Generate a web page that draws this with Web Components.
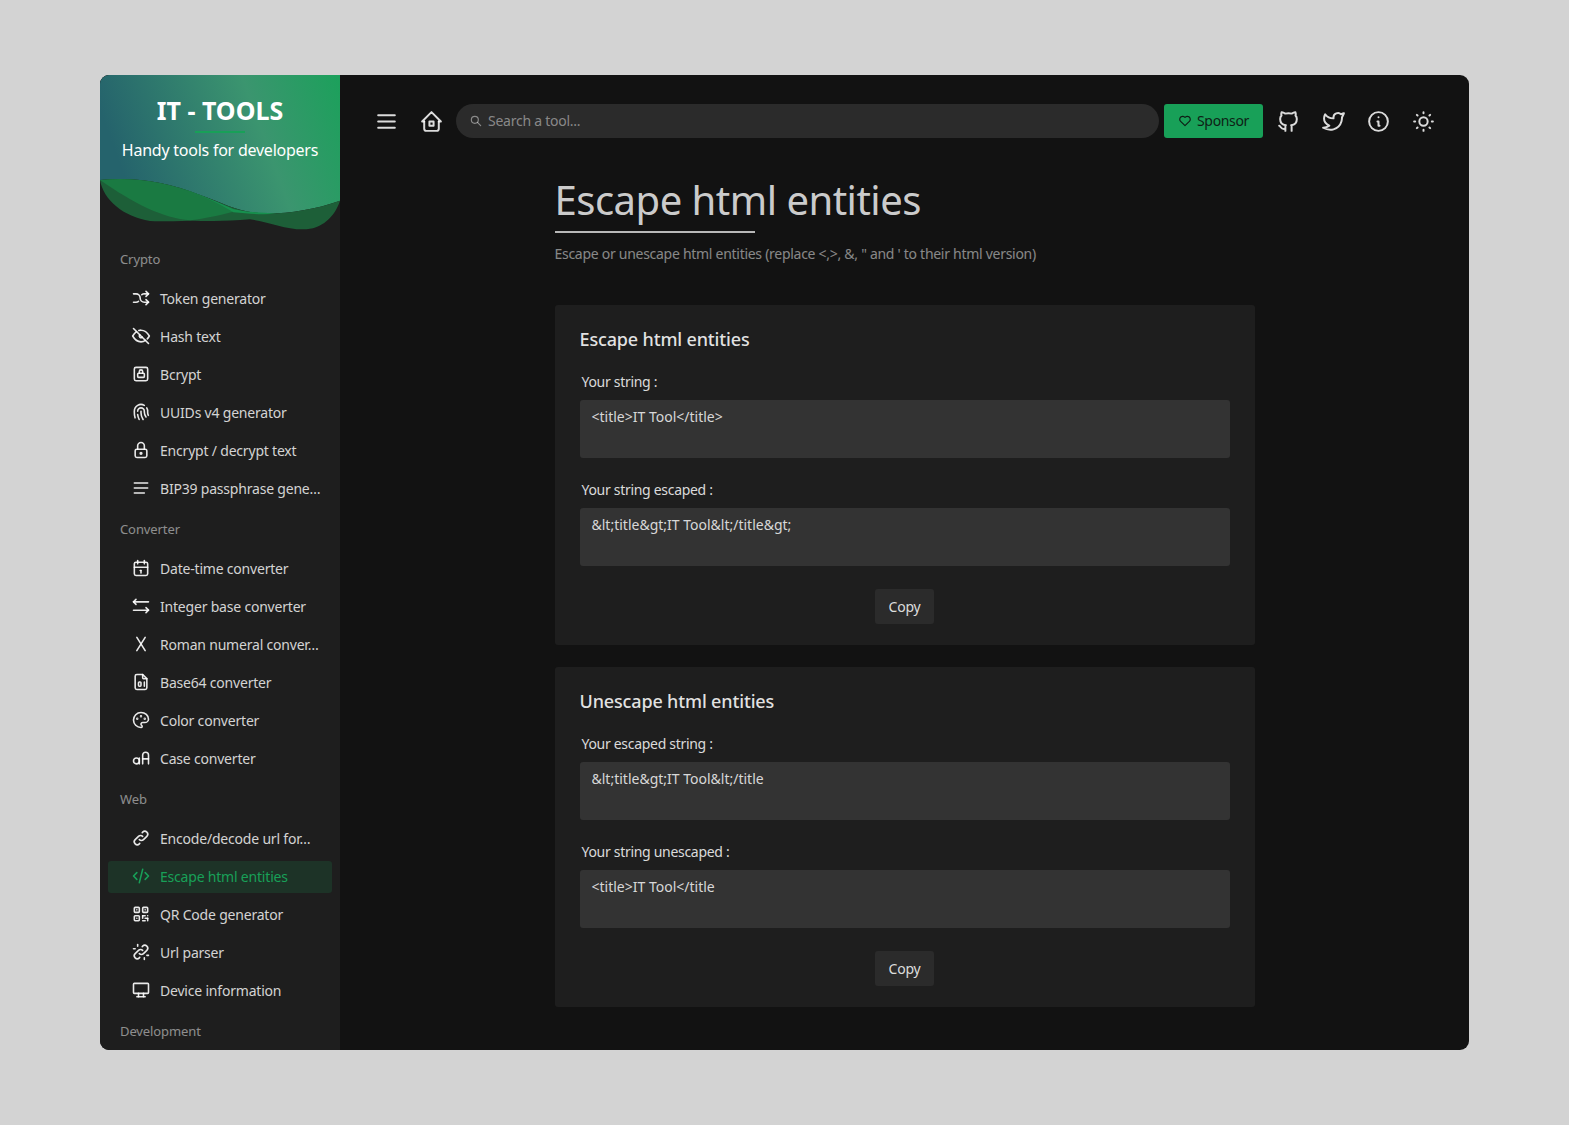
<!DOCTYPE html>
<html>
<head>
<meta charset="utf-8">
<title>IT Tools</title>
<style>
    html, body { margin: 0; height: 100%; background: #d3d3d3; }
    body { font-family: "Noto Sans", "Open Sans", sans-serif; padding: 75px 100px 0; box-sizing: border-box; overflow: hidden; }
</style>
</head>
<body>
<it-app></it-app>

<script>
const ICONS = {
    shuffle: '<path d="M18 4l3 3l-3 3"/><path d="M18 20l3 -3l-3 -3"/><path d="M3 7h3a5 5 0 0 1 5 5a5 5 0 0 0 5 5h5"/><path d="M21 7h-5a4.978 4.978 0 0 0 -3 1m-4 8a4.984 4.984 0 0 1 -3 1h-3"/>',
    eyeoff: '<path d="M3 3l18 18"/><path d="M10.584 10.587a2 2 0 0 0 2.828 2.83"/><path d="M9.363 5.365a9.466 9.466 0 0 1 2.637 -.365c4 0 7.333 2.333 10 7c-.778 1.361 -1.612 2.524 -2.503 3.488m-2.14 1.861c-1.631 1.1 -3.415 1.651 -5.357 1.651c-4 0 -7.333 -2.333 -10 -7c1.369 -2.395 2.913 -4.175 4.632 -5.341"/>',
    locksquare: '<rect x="4" y="4" width="16" height="16" rx="2"/><rect x="8" y="11" width="8" height="5" rx="1"/><path d="M10 11v-2a2 2 0 1 1 4 0v2"/>',
    fingerprint: '<path d="M18.9 7a8 8 0 0 1 1.1 5v1a6 6 0 0 0 .8 3"/><path d="M8 11a4 4 0 0 1 8 0v1a10 10 0 0 0 2 6"/><path d="M12 11v2a14 14 0 0 0 2.5 8"/><path d="M8 15a18 18 0 0 0 1.8 6"/><path d="M4.9 19a22 22 0 0 1 -.9 -7v-1a8 8 0 0 1 12 -6.95"/>',
    lock: '<rect x="5" y="11" width="14" height="10" rx="2"/><circle cx="12" cy="16" r="1"/><path d="M8 11v-4a4 4 0 0 1 8 0v4"/>',
    lines: '<path d="M4 6h16"/><path d="M4 12h16"/><path d="M4 18h12"/>',
    calendar: '<rect x="4" y="5" width="16" height="16" rx="2"/><path d="M16 3v4"/><path d="M8 3v4"/><path d="M4 11h16"/><path d="M11 15h1"/><path d="M12 15v3"/>',
    swap: '<path d="M21 17h-18"/><path d="M6 10l-3 -3l3 -3"/><path d="M3 7h18"/><path d="M18 20l3 -3l-3 -3"/>',
    letterx: '<path d="M7 4l10 16"/><path d="M17 4l-10 16"/>',
    filedigit: '<path d="M14 3v4a1 1 0 0 0 1 1h4"/><path d="M17 21h-10a2 2 0 0 1 -2 -2v-14a2 2 0 0 1 2 -2h7l5 5v11a2 2 0 0 1 -2 2z"/><rect x="9" y="12" width="3" height="5" rx="1"/><path d="M16 12v5"/>',
    palette: '<path d="M12 21a9 9 0 1 1 0 -18a9 8 0 0 1 9 8a4.5 4 0 0 1 -4.5 4h-2.5a2 2 0 0 0 -1 3.75a1.3 1.3 0 0 1 -1 2.25"/><circle cx="7.5" cy="10.5" r=".5"/><circle cx="12" cy="7.5" r=".5"/><circle cx="16.5" cy="10.5" r=".5"/>',
    lettercase: '<circle cx="6.5" cy="15.5" r="3.5"/><path d="M14 19v-10.5a3.5 3.5 0 0 1 7 0v10.5"/><path d="M14 13h7"/><path d="M10 12v7"/>',
    link: '<path d="M10 14a3.5 3.5 0 0 0 5 0l4 -4a3.5 3.5 0 0 0 -5 -5l-.5 .5"/><path d="M14 10a3.5 3.5 0 0 0 -5 0l-4 4a3.5 3.5 0 0 0 5 5l.5 -.5"/>',
    code: '<path d="M7 8l-4 4l4 4"/><path d="M17 8l4 4l-4 4"/><path d="M14 4l-4 16"/>',
    qrcode: '<rect x="4" y="4" width="6" height="6" rx="1"/><path d="M7 17v.01"/><rect x="14" y="4" width="6" height="6" rx="1"/><path d="M7 7v.01"/><rect x="4" y="14" width="6" height="6" rx="1"/><path d="M17 7v.01"/><path d="M14 14h3"/><path d="M20 14v.01"/><path d="M14 14v3"/><path d="M14 20h3"/><path d="M17 17h3"/><path d="M20 17v3"/>',
    unlink: '<path d="M10 14a3.5 3.5 0 0 0 5 0l4 -4a3.5 3.5 0 0 0 -5 -5l-.5 .5"/><path d="M14 10a3.5 3.5 0 0 0 -5 0l-4 4a3.5 3.5 0 0 0 5 5l.5 -.5"/><path d="M16 21v-2"/><path d="M19 16h2"/><path d="M3 8h2"/><path d="M8 3v2"/>',
    desktop: '<rect x="3" y="4" width="18" height="12" rx="1"/><path d="M7 20h10"/><path d="M9 16v4"/><path d="M15 16v4"/>',
    menu: '<path d="M4 6h16"/><path d="M4 12h16"/><path d="M4 18h16"/>',
    home: '<path d="M5 12h-2l9 -9l9 9h-2"/><path d="M5 12v7a2 2 0 0 0 2 2h10a2 2 0 0 0 2 -2v-7"/><path d="M10 12h4v4h-4z"/>',
    search: '<circle cx="10" cy="10" r="6"/><path d="M20 20l-5.5 -5.5"/>',
    heart: '<path d="M19.5 12.572l-7.5 7.428l-7.5 -7.428a5 5 0 1 1 7.5 -6.566a5 5 0 1 1 7.5 6.572"/>',
    github: '<path d="M9 19c-4.3 1.4 -4.3 -2.5 -6 -3m12 5v-3.5c0 -1 .1 -1.4 -.5 -2c2.8 -.3 5.5 -1.4 5.5 -6a4.6 4.6 0 0 0 -1.3 -3.2a4.2 4.2 0 0 0 -.1 -3.2s-1.1 -.3 -3.5 1.3a12.3 12.3 0 0 0 -6.2 0c-2.4 -1.6 -3.5 -1.3 -3.5 -1.3a4.2 4.2 0 0 0 -.1 3.2a4.6 4.6 0 0 0 -1.3 3.2c0 4.6 2.7 5.7 5.5 6c-.6 .6 -.6 1.2 -.5 2v3.5"/>',
    twitter: '<path d="M22 4.01c-1 .49 -1.98 .689 -3 .99c-1.121 -1.265 -2.783 -1.335 -4.38 -.737s-2.643 2.06 -2.62 3.737v1c-3.245 .083 -6.135 -1.395 -8 -4c0 0 -4.182 7.433 4 11c-1.872 1.247 -3.739 2.088 -6 2c3.308 1.803 6.913 2.423 10.034 1.517c3.58 -1.04 6.522 -3.723 7.651 -7.742a13.84 13.84 0 0 0 .497 -3.753c-.002 -.249 1.51 -2.772 1.818 -4.013z"/>',
    info: '<circle cx="12" cy="12" r="9"/><path d="M12 8h.01"/><path d="M11 12h1v4h1"/>',
    sun: '<circle cx="12" cy="12" r="4"/><path d="M3 12h1m8 -9v1m8 8h1m-9 8v1m-6.4 -15.4l.7 .7m12.1 -.7l-.7 .7m0 11.4l.7 .7m-12.1 -.7l-.7 .7"/>'
};

const TOOLS = [
    { name: 'Crypto', items: [
        ['shuffle', 'Token generator'], ['eyeoff', 'Hash text'], ['locksquare', 'Bcrypt'],
        ['fingerprint', 'UUIDs v4 generator'], ['lock', 'Encrypt / decrypt text'], ['lines', 'BIP39 passphrase gene…']
    ]},
    { name: 'Converter', items: [
        ['calendar', 'Date-time converter'], ['swap', 'Integer base converter'], ['letterx', 'Roman numeral conver…'],
        ['filedigit', 'Base64 converter'], ['palette', 'Color converter'], ['lettercase', 'Case converter']
    ]},
    { name: 'Web', items: [
        ['link', 'Encode/decode url for…'], ['code', 'Escape html entities', true], ['qrcode', 'QR Code generator'],
        ['unlink', 'Url parser'], ['desktop', 'Device information']
    ]},
    { name: 'Development', items: [] }
];

class ItIcon extends HTMLElement {
    connectedCallback() {
        const size = this.getAttribute('size') || 20;
        const stroke = this.getAttribute('stroke') || 2;
        this.attachShadow({mode: 'open'});
        this.shadowRoot.innerHTML = `
        <style>
            :host { display: inline-flex; width: ${size}px; height: ${size}px; flex: none; }
            svg { width: 100%; height: 100%; }
        </style>
        <svg viewBox="0 0 24 24" fill="none" stroke="currentColor" stroke-width="${stroke}" stroke-linecap="round" stroke-linejoin="round">${ICONS[this.getAttribute('name')]}</svg>
        `;
    }
}
customElements.define('it-icon', ItIcon);

class ItHero extends HTMLElement {
    connectedCallback() {
        this.attachShadow({mode: 'open'});
        this.shadowRoot.innerHTML = `
        <style>
            :host { display: block; position: relative; height: 160px; color: #fff; text-align: center; }
            svg { position: absolute; left: 0; top: 0; width: 240px; height: 160px; }
            .txt { position: relative; padding-top: 18px; }
            .title { font-size: 25px; line-height: 34px; font-weight: 700; }
            .bar { width: 50px; height: 2px; background: #18a058; margin: 4px auto 0; }
            .sub { font-size: 16px; line-height: 22px; margin-top: 6px; letter-spacing: -.24px; }
        </style>
        <svg viewBox="0 -285 720 480">
            <defs>
                <linearGradient id="g" gradientUnits="userSpaceOnUse" x1="40" y1="-70" x2="700" y2="-310">
                    <stop offset="0" stop-color="#25636c"/>
                    <stop offset=".62" stop-color="#3b956f"/>
                    <stop offset="1" stop-color="#1da05c"/>
                </linearGradient>
            </defs>
            <path fill="url(#g)" d="M0 -285H720V92C640 120 560 132 490 130C420 128 370 100 300 75C200 35 100 20 0 30Z"/>
            <path fill="#1d5f38" d="M0 30C100 20 200 35 300 75C370 100 420 128 490 130C560 132 640 120 720 92C705 140 665 178 610 178C550 178 510 155 450 148C380 155 320 153 270 152C220 153 180 155 150 153C70 140 10 90 0 30Z"/>
            <path fill="#1a7a42" d="M0 30C100 20 200 35 300 75C340 90 370 105 400 125C350 138 310 146 270 151C190 145 100 100 0 30Z"/>
            <path fill="#17904e" d="M230 50C280 65 340 90 400 117C430 125 480 128 530 131C490 134 450 132 400 127C350 95 290 70 230 50Z"/>
        </svg>
        <div class="txt">
            <div class="title">IT - TOOLS</div>
            <div class="bar"></div>
            <div class="sub">Handy tools for developers</div>
        </div>
        `;
    }
}
customElements.define('it-hero', ItHero);

class ItNavItem extends HTMLElement {
    connectedCallback() {
        const active = this.hasAttribute('active');
        this.attachShadow({mode: 'open'});
        this.shadowRoot.innerHTML = `
        <style>
            :host { display: flex; align-items: center; box-sizing: border-box; height: 32px; margin: 0 8px 6px; padding: 0 12px 2px 23px; border-radius: 3px;
                font-size: 14px; letter-spacing: -.2px; color: ${active ? '#18a058' : 'rgba(255,255,255,.82)'}; background: ${active ? 'rgba(24,160,88,.16)' : 'none'}; }
            it-icon { margin-right: 9px; color: ${active ? '#18a058' : 'rgba(255,255,255,.9)'}; }
            span { white-space: nowrap; }
        </style>
        <it-icon name="${this.getAttribute('icon')}" size="20" stroke="1.9"></it-icon><span><slot></slot></span>
        `;
    }
}
customElements.define('it-nav-item', ItNavItem);

class ItNavGroup extends HTMLElement {
    connectedCallback() {
        this.attachShadow({mode: 'open'});
        this.shadowRoot.innerHTML = `
        <style>
            :host { display: block; }
            .label { font-size: 13px; line-height: 18px; letter-spacing: -.1px; color: rgba(255,255,255,.5); padding: 0 20px; margin: 15px 0 15px; }
        </style>
        <div class="label">${this.getAttribute('label')}</div>
        <slot></slot>
        `;
    }
}
customElements.define('it-nav-group', ItNavGroup);

class ItSidebar extends HTMLElement {
    connectedCallback() {
        this.attachShadow({mode: 'open'});
        this.shadowRoot.innerHTML = `
        <style>
            :host { display: block; width: 240px; flex: none; background: #1e1e1e; overflow: hidden; }
        </style>
        <it-hero></it-hero>
        <div class="menu"></div>
        `;
        const menu = this.shadowRoot.querySelector('.menu');
        for (const group of TOOLS) {
            const g = document.createElement('it-nav-group');
            g.setAttribute('label', group.name);
            for (const [icon, text, active] of group.items) {
                const item = document.createElement('it-nav-item');
                item.setAttribute('icon', icon);
                if (active) item.setAttribute('active', '');
                item.textContent = text;
                g.appendChild(item);
            }
            menu.appendChild(g);
        }
    }
}
customElements.define('it-sidebar', ItSidebar);

class ItTopbar extends HTMLElement {
    connectedCallback() {
        this.attachShadow({mode: 'open'});
        this.shadowRoot.innerHTML = `
        <style>
            :host { display: flex; align-items: center; height: 34px; padding: 29px 29px 0; color: rgba(255,255,255,.85); }
            .btn { display: flex; align-items: center; justify-content: center; width: 34px; height: 34px; margin-left: 11px; flex: none; }
            .btn.first { margin-left: 0; }
            .search { flex: 1; height: 34px; box-sizing: border-box; margin: 0 5px 0 8px; border-radius: 17px; background: #2b2b2b; display: flex; align-items: center;
                padding: 0 0 1px 13px; font-size: 14px; letter-spacing: -.25px; color: rgba(255,255,255,.45); }
            .search it-icon { margin-right: 5px; }
            .sponsor { display: flex; align-items: center; justify-content: center; width: 99px; height: 34px; box-sizing: border-box; padding-bottom: 1px; border-radius: 3px; background: #18a058;
                color: #0e1e15; font-size: 14px; letter-spacing: -.35px; margin-right: -3px; flex: none; }
            .sponsor it-icon { margin-right: 5px; }
        </style>
        <div class="btn first"><it-icon name="menu" size="25" stroke="1.9"></it-icon></div>
        <div class="btn"><it-icon name="home" size="25" stroke="1.9"></it-icon></div>
        <div class="search"><it-icon name="search" size="14" stroke="2"></it-icon>Search a tool...</div>
        <div class="sponsor"><it-icon name="heart" size="14" stroke="2"></it-icon>Sponsor</div>
        <div class="btn"><it-icon name="github" size="25" stroke="1.9"></it-icon></div>
        <div class="btn"><it-icon name="twitter" size="25" stroke="1.9"></it-icon></div>
        <div class="btn"><it-icon name="info" size="25" stroke="1.9"></it-icon></div>
        <div class="btn"><it-icon name="sun" size="25" stroke="1.9"></it-icon></div>
        `;
    }
}
customElements.define('it-topbar', ItTopbar);

class ItField extends HTMLElement {
    connectedCallback() {
        this.attachShadow({mode: 'open'});
        this.shadowRoot.innerHTML = `
        <style>
            :host { display: block; margin-bottom: 22px; }
            .label { font-size: 14px; line-height: 20px; letter-spacing: -.3px; padding-left: 2px; color: rgba(255,255,255,.85); margin-bottom: 8px; }
            .box { height: 58px; box-sizing: border-box; padding: 7px 12px; border-radius: 3px; background: #333; font-size: 14px; line-height: 20px; color: rgba(255,255,255,.82); }
        </style>
        <div class="label">${this.getAttribute('label')}</div>
        <div class="box"><slot></slot></div>
        `;
    }
}
customElements.define('it-field', ItField);

class ItCard extends HTMLElement {
    connectedCallback() {
        this.attachShadow({mode: 'open'});
        this.shadowRoot.innerHTML = `
        <style>
            :host { display: block; box-sizing: border-box; background: #1e1e1e; border-radius: 3px; padding: 20px 25px 21px; margin-bottom: 22px; }
            .title { font-size: 18px; line-height: 28px; font-weight: 500; letter-spacing: -.15px; color: rgba(255,255,255,.88); margin-bottom: 19px; }
            .foot { display: flex; justify-content: center; margin-top: 23px; }
            button { font: inherit; font-size: 14px; letter-spacing: -.2px; width: 59px; height: 35px; border: 0; border-radius: 3px; background: #2b2b2b; color: rgba(255,255,255,.85); padding: 0; }
        </style>
        <div class="title">${this.getAttribute('title')}</div>
        <slot></slot>
        <div class="foot"><button>Copy</button></div>
        `;
    }
}
customElements.define('it-card', ItCard);

class ItApp extends HTMLElement {
    connectedCallback() {
        this.attachShadow({mode: 'open'});
        this.shadowRoot.innerHTML = `
        <style>
            :host { display: flex; height: 975px; background: #121212; border-radius: 9px; overflow: hidden; }
            .main { flex: 1; min-width: 0; }
            .page { width: 700px; margin: 0 auto; }
            h1 { margin: 36px 0 0; font-size: 40px; line-height: 52px; font-weight: 400; letter-spacing: -.5px; color: rgba(255,255,255,.8); }
            .sep { width: 200px; height: 2px; background: rgba(255,255,255,.7); margin: 5px 0 0; }
            .desc { font-size: 14px; line-height: 20px; letter-spacing: -.28px; color: rgba(255,255,255,.5); margin: 11px 0 41px; }
        </style>
        <it-sidebar></it-sidebar>
        <div class="main">
            <it-topbar></it-topbar>
            <div class="page">
                <h1>Escape html entities</h1>
                <div class="sep"></div>
                <div class="desc">Escape or unescape html entities (replace &lt;,&gt;, &amp;, " and ' to their html version)</div>
                <it-card title="Escape html entities">
                    <it-field label="Your string :">&lt;title&gt;IT Tool&lt;/title&gt;</it-field>
                    <it-field label="Your string escaped :">&amp;lt;title&amp;gt;IT Tool&amp;lt;/title&amp;gt;</it-field>
                </it-card>
                <it-card title="Unescape html entities">
                    <it-field label="Your escaped string :">&amp;lt;title&amp;gt;IT Tool&amp;lt;/title</it-field>
                    <it-field label="Your string unescaped :">&lt;title&gt;IT Tool&lt;/title</it-field>
                </it-card>
            </div>
        </div>
        `;
    }
}
customElements.define('it-app', ItApp);
</script>
</body>
</html>
